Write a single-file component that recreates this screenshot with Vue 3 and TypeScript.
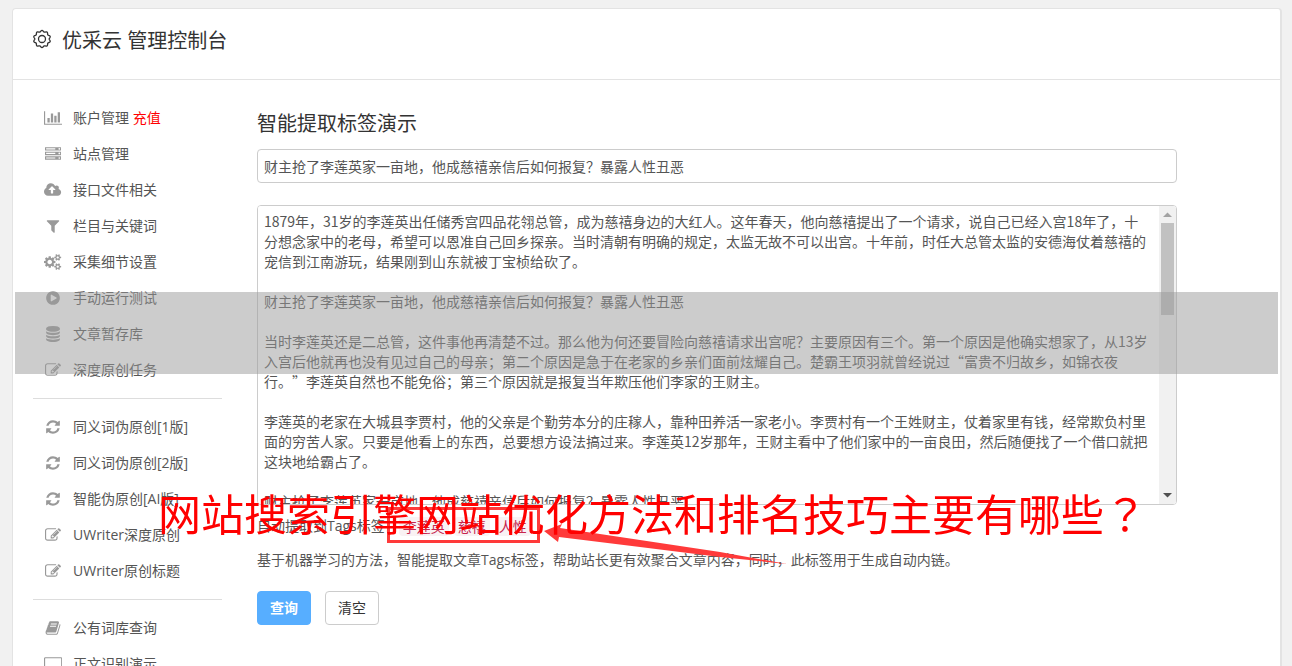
<script setup lang="ts">
import { ref } from 'vue'

interface Icon {
  width: number
  path: string
}

interface MenuItem {
  icon: string
  label: string
  extra?: string
}

const icons: Record<string, Icon> = {
  chart: {
    width: 2048,
    path: 'M640 896v512H384V896h256zm384-512v1024H768V384h256zm1024 1152v128H0V128h128v1408h1920zm-640-896v768h-256V640h256zm384-384v1152h-256V256h256z',
  },
  server: {
    width: 1792,
    path: 'M128 1408h1024v-128H128v128zm0-512h1024V768H128v128zm1568 448q0-40-28-68t-68-28-68 28-28 68 28 68 68 28 68-28 28-68zM128 384h1024V256H128v128zm1568 448q0-40-28-68t-68-28-68 28-28 68 28 68 68 28 68-28 28-68zm0-512q0-40-28-68t-68-28-68 28-28 68 28 68 68 28 68-28 28-68zm96 832v384H0v-384h1792zm0-512v384H0V640h1792zm0-512v384H0V128h1792z',
  },
  cloud: {
    width: 1920,
    path: 'M1280 864q0-14-9-23l-352-352q-9-9-23-9t-23 9l-351 351q-10 12-10 24 0 14 9 23t23 9h224v352q0 13 9.5 22.5t22.5 9.500h192q13 0 22.500-9.500t9.500-22.500v-352h224q13 0 22.500-9.500t9.500-22.500zm640 288q0 159-112.500 271.500t-271.500 112.500h-1088q-185 0-316.500-131.500t-131.500-316.500q0-130 70-240t188-165q-2-30-2-43 0-212 150-362t362-150q156 0 285.500 87t188.500 231q71-62 166-62 106 0 181 75t75 181q0 76-41 138 130 31 213.500 135.500t83.500 238.500z',
  },
  filter: {
    width: 1792,
    path: 'M1595 295q17 41-14 70l-493 493v742q0 42-39 59-13 5-25 5-27 0-45-19l-256-256q-19-19-19-45V858L211 365q-31-29-14-70 17-39 59-39h1280q42 0 59 39z',
  },
  cogs: {
    width: 1920,
    path: 'M896 896q0-106-75-181t-181-75-181 75-75 181 75 181 181 75 181-75 75-181zm768 512q0-52-38-90t-90-38-90 38-38 90q0 53 37.500 90.500t90.500 37.500 90.500-37.500 37.500-90.500zm0-1024q0-52-38-90t-90-38-90 38-38 90q0 53 37.500 90.500t90.500 37.500 90.500-37.500 37.500-90.500zm-384 421v185q0 10-7 19.500t-16 10.500l-155 24q-11 35-32 76 34 48 90 115 7 11 7 20 0 12-7 19-23 30-82.500 89.500t-78.500 59.500q-11 0-21-7l-115-90q-37 19-77 31-11 108-23 155-7 24-30 24h-186q-11 0-20-7.500t-10-17.500l-23-153q-34-10-75-31l-118 89q-7 7-20 7-11 0-21-8-144-133-144-160 0-9 7-19 10-14 41-53t47-61q-23-44-35-82l-152-24q-10-1-17-9.500t-7-19.500v-185q0-10 7-19.500t16-10.500l155-24q11-35 32-76-34-48-90-115-7-11-7-20 0-12 7-20 22-30 82-89t79-59q11 0 21 7l115 90q34-18 77-32 11-108 23-154 7-24 30-24h186q11 0 20 7.500t10 17.500l23 153q34 10 75 31l118-89q8-7 20-7 11 0 21 8 144 133 144 160 0 8-7 19-12 16-42 54t-45 60q23 48 34 82l152 23q10 2 17 10.500t7 19.500zm640 533v140q0 16-149 31-12 27-30 52 51 113 51 138 0 4-4 7-122 71-124 71-8 0-46-47t-52-68q-20 2-30 2t-30-2q-14 21-52 68t-46 47q-2 0-124-71-4-3-4-7 0-25 51-138-18-25-30-52-149-15-149-31v-140q0-16 149-31 13-29 30-52-51-113-51-138 0-4 4-7 4-2 35-20t59-34 30-16q8 0 46 46.500t52 67.500q20-2 30-2t30 2q51-71 92-112l6-2q4 0 124 70 4 3 4 7 0 25-51 138 17 23 30 52 149 15 149 31zm0-1024v140q0 16-149 31-12 27-30 52 51 113 51 138 0 4-4 7-122 71-124 71-8 0-46-47t-52-68q-20 2-30 2t-30-2q-14 21-52 68t-46 47q-2 0-124-71-4-3-4-7 0-25 51-138-18-25-30-52-149-15-149-31v-140q0-16 149-31 13-29 30-52-51-113-51-138 0-4 4-7 4-2 35-20t59-34 30-16q8 0 46 46.500t52 67.500q20-2 30-2t30 2q51-71 92-112l6-2q4 0 124 70 4 3 4 7 0 25-51 138 17 23 30 52 149 15 149 31z',
  },
  play: {
    width: 1792,
    path: 'M896 128q209 0 385.500 103t279.500 279.500 103 385.500-103 385.500-279.500 279.500-385.500 103-385.500-103-279.500-279.500-103-385.500 103-385.500 279.500-279.500 385.500-103zm384 823q32-18 32-55t-32-55l-544-320q-31-19-64-1-32 19-32 56v640q0 37 32 56 16 8 32 8 17 0 32-9z',
  },
  database: {
    width: 1792,
    path: 'M896 768q237 0 443-43t325-127v170q0 69-103 128t-280 93.500-385 34.500-385-34.500-280-93.500-103-128v-170q119 84 325 127t443 43zm0 768q237 0 443-43t325-127v170q0 69-103 128t-280 93.500-385 34.500-385-34.500-280-93.500-103-128v-170q119 84 325 127t443 43zm0-384q237 0 443-43t325-127v170q0 69-103 128t-280 93.500-385 34.500-385-34.500-280-93.500-103-128v-170q119 84 325 127t443 43zm0-1152q208 0 385 34.500t280 93.500 103 128v128q0 69-103 128t-280 93.500-385 34.500-385-34.500-280-93.500-103-128v-128q0-69 103-128t280-93.500 385-34.500z',
  },
  edit: {
    width: 1792,
    path: 'M888 1184l116-116-152-152-116 116v56h96v96h56zm440-720q-16-16-33 1l-350 350q-17 17-1 33t33-1l350-350q17-17 1-33zm80 594v190q0 119-84.500 203.500t-203.500 84.500h-832q-119 0-203.500-84.500t-84.500-203.500v-832q0-119 84.500-203.500t203.500-84.500h832q63 0 117 25 15 7 18 23 3 17-9 29l-49 49q-14 14-32 8-23-6-45-6h-832q-66 0-113 47t-47 113v832q0 66 47 113t113 47h832q66 0 113-47t47-113v-126q0-13 9-22l64-64q15-15 35-7t20 29zm-96-738l288 288-672 672h-288v-288zm444 132l-92 92-288-288 92-92q28-28 68-28t68 28l152 152q28 28 28 68t-28 68z',
  },
  refresh: {
    width: 1792,
    path: 'M1639 1056q0 5-1 7-64 268-268 434.500t-478 166.500q-146 0-282.500-55t-243.500-157l-129 129q-19 19-45 19t-45-19-19-45v-448q0-26 19-45t45-19h448q26 0 45 19t19 45-19 45l-137 137q71 66 161 102t187 36q134 0 250-65t186-179q11-17 53-117 8-23 30-23h192q13 0 22.500 9.500t9.500 22.500zm25-800v448q0 26-19 45t-45 19h-448q-26 0-45-19t-19-45 19-45l138-138q-148-137-349-137-134 0-250 65t-186 179q-11 17-53 117-8 23-30 23h-199q-13 0-22.500-9.500t-9.500-22.500v-7q65-268 270-434.500t480-166.500q146 0 284 55.500t245 156.500l130-129q19-19 45-19t45 19 19 45z',
  },
  book: {
    width: 1792,
    path: 'M1703 478q40 57 18 129l-275 906q-19 64-76.500 107.500t-122.500 43.500h-923q-77 0-148.500-53.500t-99.500-131.500q-24-67-2-127 0-4 3-27t4-37q1-8-3-21.500t-3-19.500q2-11 8-21t16.500-23.500 16.500-23.500q23-38 45-91.500t30-91.500q3-10 .5-30t-.5-28q3-11 17-28t17-23q21-36 42-92t25-90q1-9-2.500-32t.5-28q4-13 22-30.500t22-22.500q19-26 42.500-84.500t27.500-96.500q1-8-3-25.500t-2-26.500q2-8 9-18t18-23 17-21q8-12 16.500-30.500t15-35 16-36 19.500-32 26.500-23.500 36-11.500 47.500 5.500l-1 3q38-9 51-9h761q74 0 114 56t18 130l-274 906q-36 119-71.500 153.500t-128.500 34.500h-869q-27 0-38 15-11 16-1 43 24 70 144 70h923q29 0 56-15.500t35-41.500l300-987q7-22 5-57 38 15 59 43zm-1064 2q-4 13 2 22.500t20 9.500h608q13 0 25.500-9.500t16.500-22.500l21-64q4-13-2-22.500t-20-9.500h-608q-13 0-25.500 9.500t-16.500 22.500zm-83 256q-4 13 2 22.500t20 9.500h608q13 0 25.500-9.500t16.500-22.500l21-64q4-13-2-22.500t-20-9.500h-608q-13 0-25.500 9.500t-16.500 22.500z',
  },
  screen: {
    width: 2048,
    path: 'M1920 1248V288q0-13-9-22t-23-10H160q-13 0-22 10t-10 22v960q0 13 10 23t22 9h1728q13 0 23-9t9-23zm128-960v960q0 66-47 113t-113 47h-736v128h352q14 0 23 9t9 23v64q0 14-9 23t-23 9H544q-14 0-23-9t-9-23v-64q0-14 9-23t23-9h352v-128H160q-66 0-113-47T0 1248V288q0-66 47-113t113-47h1728q66 0 113 47t47 113z',
  },
}

const groups: MenuItem[][] = [
  [
    { icon: 'chart', label: '账户管理', extra: '充值' },
    { icon: 'server', label: '站点管理' },
    { icon: 'cloud', label: '接口文件相关' },
    { icon: 'filter', label: '栏目与关键词' },
    { icon: 'cogs', label: '采集细节设置' },
    { icon: 'play', label: '手动运行测试' },
    { icon: 'database', label: '文章暂存库' },
    { icon: 'edit', label: '深度原创任务' },
  ],
  [
    { icon: 'refresh', label: '同义词伪原创[1版]' },
    { icon: 'refresh', label: '同义词伪原创[2版]' },
    { icon: 'refresh', label: '智能伪原创[AI版]' },
    { icon: 'edit', label: 'UWriter深度原创' },
    { icon: 'edit', label: 'UWriter原创标题' },
  ],
  [
    { icon: 'book', label: '公有词库查询' },
    { icon: 'screen', label: '正文识别演示' },
  ],
]

const headline = '财主抢了李莲英家一亩地，他成慈禧亲信后如何报复？暴露人性丑恶'
const title = ref(headline)
const article = ref(
  [
    '1879年，31岁的李莲英出任储秀宫四品花翎总管，成为慈禧身边的大红人。这年春天，他向慈禧提出了一个请求，说自己已经入宫18年了，十分想念家中的老母，希望可以恩准自己回乡探亲。当时清朝有明确的规定，太监无故不可以出宫。十年前，时任大总管太监的安德海仗着慈禧的宠信到江南游玩，结果刚到山东就被丁宝桢给砍了。',
    headline,
    '当时李莲英还是二总管，这件事他再清楚不过。那么他为何还要冒险向慈禧请求出宫呢？主要原因有三个。第一个原因是他确实想家了，从13岁入宫后他就再也没有见过自己的母亲；第二个原因是急于在老家的乡亲们面前炫耀自己。楚霸王项羽就曾经说过“富贵不归故乡，如锦衣夜行。”李莲英自然也不能免俗；第三个原因就是报复当年欺压他们李家的王财主。',
    '李莲英的老家在大城县李贾村，他的父亲是个勤劳本分的庄稼人，靠种田养活一家老小。李贾村有一个王姓财主，仗着家里有钱，经常欺负村里面的穷苦人家。只要是他看上的东西，总要想方设法搞过来。李莲英12岁那年，王财主看中了他们家中的一亩良田，然后随便找了一个借口就把这块地给霸占了。',
    headline,
  ].join('\n\n'),
)
const tags = ['李莲英', '慈禧', '人性']

// Scalloped outline of the header gear, centred in a 20x20 box.
const gear =
  'M' +
  Array.from({ length: 100 }, (_, i) => {
    const a = (i / 100) * Math.PI * 2
    const r = 7.9 + 0.7 * Math.cos(a * 10)
    return `${(10 + r * Math.sin(a)).toFixed(2)} ${(10 - r * Math.cos(a)).toFixed(2)}`
  }).join('L') +
  'Z'

function clearAll() {
  title.value = ''
  article.value = ''
}
</script>

<template>
  <div class="page">
    <div class="card">
      <header class="top">
        <svg class="gear" viewBox="0 0 20 20" aria-hidden="true">
          <path :d="gear" />
          <circle cx="10" cy="10" r="3.5" />
        </svg>
        <h1>优采云 管理控制台</h1>
      </header>
      <div class="body">
        <nav class="side">
          <ul v-for="(group, g) in groups" :key="g">
            <li v-for="item in group" :key="item.label">
              <a href="#">
                <span class="icon">
                  <svg
                    :viewBox="`0 0 ${icons[item.icon].width} 1792`"
                    height="16"
                    aria-hidden="true"
                  >
                    <path :d="icons[item.icon].path" />
                  </svg>
                </span>
                <span>{{ item.label }} <b v-if="item.extra">{{ item.extra }}</b></span>
              </a>
            </li>
          </ul>
        </nav>
        <main class="main">
          <h2><label for="title">智能提取标签演示</label></h2>
          <input id="title" v-model="title" type="text" />
          <div class="editor">
            <textarea v-model="article" aria-label="文章内容" spellcheck="false"></textarea>
            <div class="scroll" aria-hidden="true">
              <svg class="up" viewBox="0 0 17 17"><path d="M4 11L8.500 6.500L13 11Z" /></svg>
              <div class="thumb"></div>
              <svg class="down" viewBox="0 0 17 17"><path d="M4 6L8.500 10.500L13 6Z" /></svg>
            </div>
          </div>
          <p class="tags">
            自动提取到Tags标签：<span class="pills"><code v-for="tag in tags" :key="tag">{{ tag }}</code></span>
          </p>
          <p class="note">基于机器学习的方法，智能提取文章Tags标签，帮助站长更有效聚合文章内容，同时，此标签用于生成自动内链。</p>
          <div class="actions">
            <button class="primary" type="button">查询</button>
            <button type="button" @click="clearAll">清空</button>
          </div>
        </main>
      </div>
    </div>

    <div class="band"></div>
    <div class="frame"></div>
    <svg class="arrow" viewBox="0 0 250 46" aria-hidden="true">
      <path d="M4 11L22 4L20 8L100 20L180 32L247 44L180 37L100 27L19 17L18 22Z" />
    </svg>
    <div class="banner">网站搜索引擎网站优化方法和排名技巧主要有哪些<span class="mark">？</span></div>
  </div>
</template>

<style>
body {
  margin: 0;
  background: #f1f1f1;
}
</style>

<style scoped>
* {
  box-sizing: border-box;
}

.page {
  position: relative;
  height: 100vh;
  padding: 8px 10px 0 12px;
  overflow: hidden;
  background: #f1f1f1;
  color: #555;
  font: 14px/20px "Open Sans", "Noto Sans CJK SC", sans-serif;
}

.card {
  min-height: 100%;
  border: 1px solid #e3e3e3;
  border-right-width: 2px;
  border-radius: 4px;
  background: #fff;
}

.top {
  display: flex;
  align-items: center;
  gap: 10px;
  height: 71px;
  padding: 0 20px 7px 19px;
  border-bottom: 1px solid #e3e3e3;
}

.gear {
  width: 20px;
  height: 20px;
  margin-bottom: 4px;
  fill: none;
  stroke: #333;
  stroke-width: 1.3;
}

h1,
h2 {
  margin: 0;
  color: #333;
  font-size: 20px;
  font-weight: 400;
  line-height: 28px;
}

.body {
  display: flex;
  gap: 35px;
  padding: 20px 103px 0 20px;
}

.side {
  flex: none;
  width: 189px;
}

ul {
  margin: 0;
  padding: 0;
  list-style: none;
}

ul + ul {
  margin-top: 10px;
  padding-top: 10px;
  border-top: 1px solid #ddd;
}

.side a {
  display: flex;
  align-items: center;
  gap: 10px;
  height: 36px;
  padding-left: 10px;
  color: #555;
  text-decoration: none;
}

.side b {
  color: #f00;
  font-weight: 400;
}

.icon {
  display: flex;
  justify-content: center;
  width: 20px;
}

.icon svg {
  fill: #999;
}

.main {
  flex: 1;
  min-width: 0;
  padding-top: 10px;
}

h2 {
  margin-bottom: 11px;
}

input,
textarea {
  display: block;
  width: 100%;
  border: 1px solid #ccc;
  border-radius: 4px;
  outline: none;
  background: #fff;
  color: #555;
  font: 14px/20px "Noto Sans CJK SC", sans-serif;
  text-spacing-trim: space-all;
}

input {
  height: 34px;
  margin-bottom: 22px;
  padding: 6px;
}

.editor {
  position: relative;
}

textarea {
  height: 300px;
  padding: 5px 25px 5px 6px;
  resize: none;
  scrollbar-width: none;
}

.scroll {
  position: absolute;
  top: 1px;
  right: 1px;
  bottom: 1px;
  display: flex;
  flex-direction: column;
  width: 17px;
  border-radius: 0 3px 3px 0;
  background: #f1f1f1;
  pointer-events: none;
}

.scroll svg {
  width: 17px;
  height: 17px;
}

.up {
  fill: #a3a3a3;
}

.down {
  margin-top: auto;
  fill: #505050;
}

.thumb {
  height: 92px;
  margin: 0 2px;
  background: #c1c1c1;
}

p {
  margin: 0;
}

.tags {
  display: flex;
  align-items: center;
  margin-top: 11px;
}

.pills {
  display: flex;
  gap: 5px;
}

code {
  padding: 0 4px;
  border-radius: 4px;
  background: #f9f2f4;
  color: #c7254e;
  font: 14px/19px "Noto Sans CJK SC", sans-serif;
}

.note {
  margin-top: 14px;
}

.actions {
  display: flex;
  gap: 14px;
  margin-top: 21px;
}

button {
  height: 34px;
  padding: 0 12px;
  border: 1px solid #ccc;
  border-radius: 4px;
  background: #fff;
  color: #333;
  font: 14px/20px "Open Sans", "Noto Sans CJK SC", sans-serif;
}

.primary {
  border-color: #57aeff;
  background: #57aeff;
  color: #fff;
  font-weight: 700;
}

.band {
  position: absolute;
  top: 292px;
  right: 14px;
  left: 15px;
  height: 82px;
  background: rgba(153, 153, 153, 0.5);
  pointer-events: none;
}

.frame {
  position: absolute;
  top: 507px;
  left: 387px;
  width: 153px;
  height: 36px;
  border: 3px solid #ff3a3a;
  pointer-events: none;
}

.arrow {
  position: absolute;
  top: 520px;
  left: 540px;
  width: 250px;
  height: 46px;
  fill: #ff3a3a;
  pointer-events: none;
}

.banner {
  position: absolute;
  top: 487px;
  left: 158px;
  color: #f00;
  font-family: "Noto Sans CJK SC", sans-serif;
  font-size: 43px;
  line-height: 50px;
  white-space: nowrap;
  pointer-events: none;
}

.mark {
  font-family: "Noto Sans CJK JP", sans-serif;
}
</style>
